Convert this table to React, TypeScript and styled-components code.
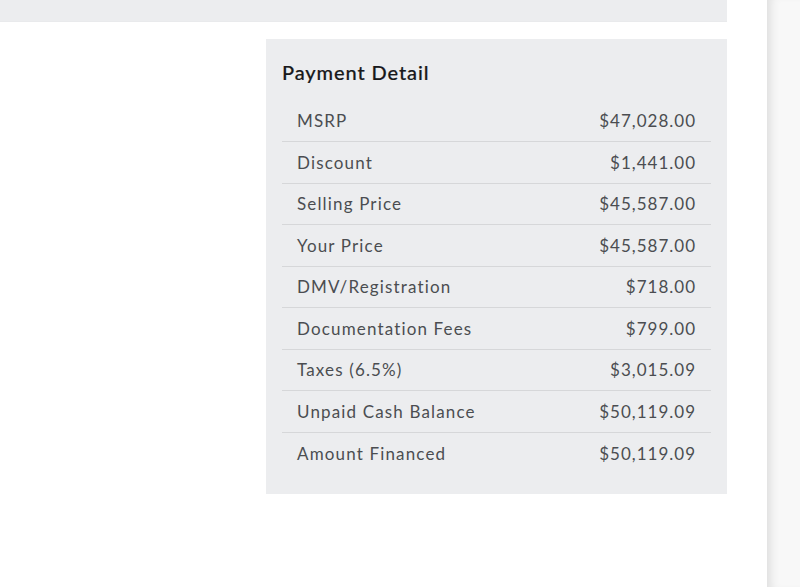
import React from "react";
import styled, { createGlobalStyle } from "styled-components";

const Global = createGlobalStyle`
  html, body { margin: 0; padding: 0; background: #ffffff; }
  body { font-family: Lato, "Open Sans", sans-serif; -webkit-font-smoothing: antialiased; }
`;

const Page = styled.div`
  display: flex;
  width: 800px;
  height: 587px;
  overflow: hidden;
`;

const Main = styled.div`
  width: 767px;
  flex: none;
  padding-right: 40px;
  box-sizing: border-box;
  display: flex;
  flex-direction: column;
  gap: 17px;
`;

const TopBar = styled.div`
  height: 22px;
  background: #ecedef;
  border-bottom: 1px solid #e9eaec;
  box-sizing: border-box;
`;

const Content = styled.div`
  display: flex;
  justify-content: flex-end;
`;

const Card = styled.section`
  width: 461px;
  background: #ecedef;
  padding: 21px 16px 20px;
  box-sizing: border-box;
`;

const Title = styled.h2`
  margin: 0 0 16.5px;
  font-size: 20px;
  line-height: 24px;
  font-weight: 500;
  color: #18191b;
  letter-spacing: 0.9px;
  -webkit-text-stroke: 0.2px #18191b;
`;

const List = styled.dl`
  margin: 0;
`;

const Row = styled.div`
  display: flex;
  justify-content: space-between;
  align-items: center;
  height: 41.5px;
  padding: 0 15px;
  box-sizing: border-box;
  border-bottom: 1px solid #d6d7d9;
  &:last-child { border-bottom: none; }
`;

const Label = styled.dt`
  font-size: 17px;
  color: #4b4d51;
  letter-spacing: 1.15px;
`;

const Value = styled.dd`
  margin: 0;
  font-size: 17px;
  color: #4b4d51;
  letter-spacing: 1px;
`;

const Side = styled.div`
  flex: 1;
  background: #f8f8f8;
  box-shadow: inset 10px 0 10px -6px rgba(0, 0, 0, 0.1);
`;

const rows: [string, string][] = [
  ["MSRP", "$47,028.00"],
  ["Discount", "$1,441.00"],
  ["Selling Price", "$45,587.00"],
  ["Your Price", "$45,587.00"],
  ["DMV/Registration", "$718.00"],
  ["Documentation Fees", "$799.00"],
  ["Taxes (6.5%)", "$3,015.09"],
  ["Unpaid Cash Balance", "$50,119.09"],
  ["Amount Financed", "$50,119.09"],
];

export default function App() {
  return (
    <>
      <Global />
      <Page>
        <Main>
          <TopBar />
          <Content>
            <Card>
              <Title>Payment Detail</Title>
              <List>
                {rows.map(([l, v]) => (
                  <Row key={l}>
                    <Label>{l}</Label>
                    <Value>{v}</Value>
                  </Row>
                ))}
              </List>
            </Card>
          </Content>
        </Main>
        <Side />
      </Page>
    </>
  );
}
